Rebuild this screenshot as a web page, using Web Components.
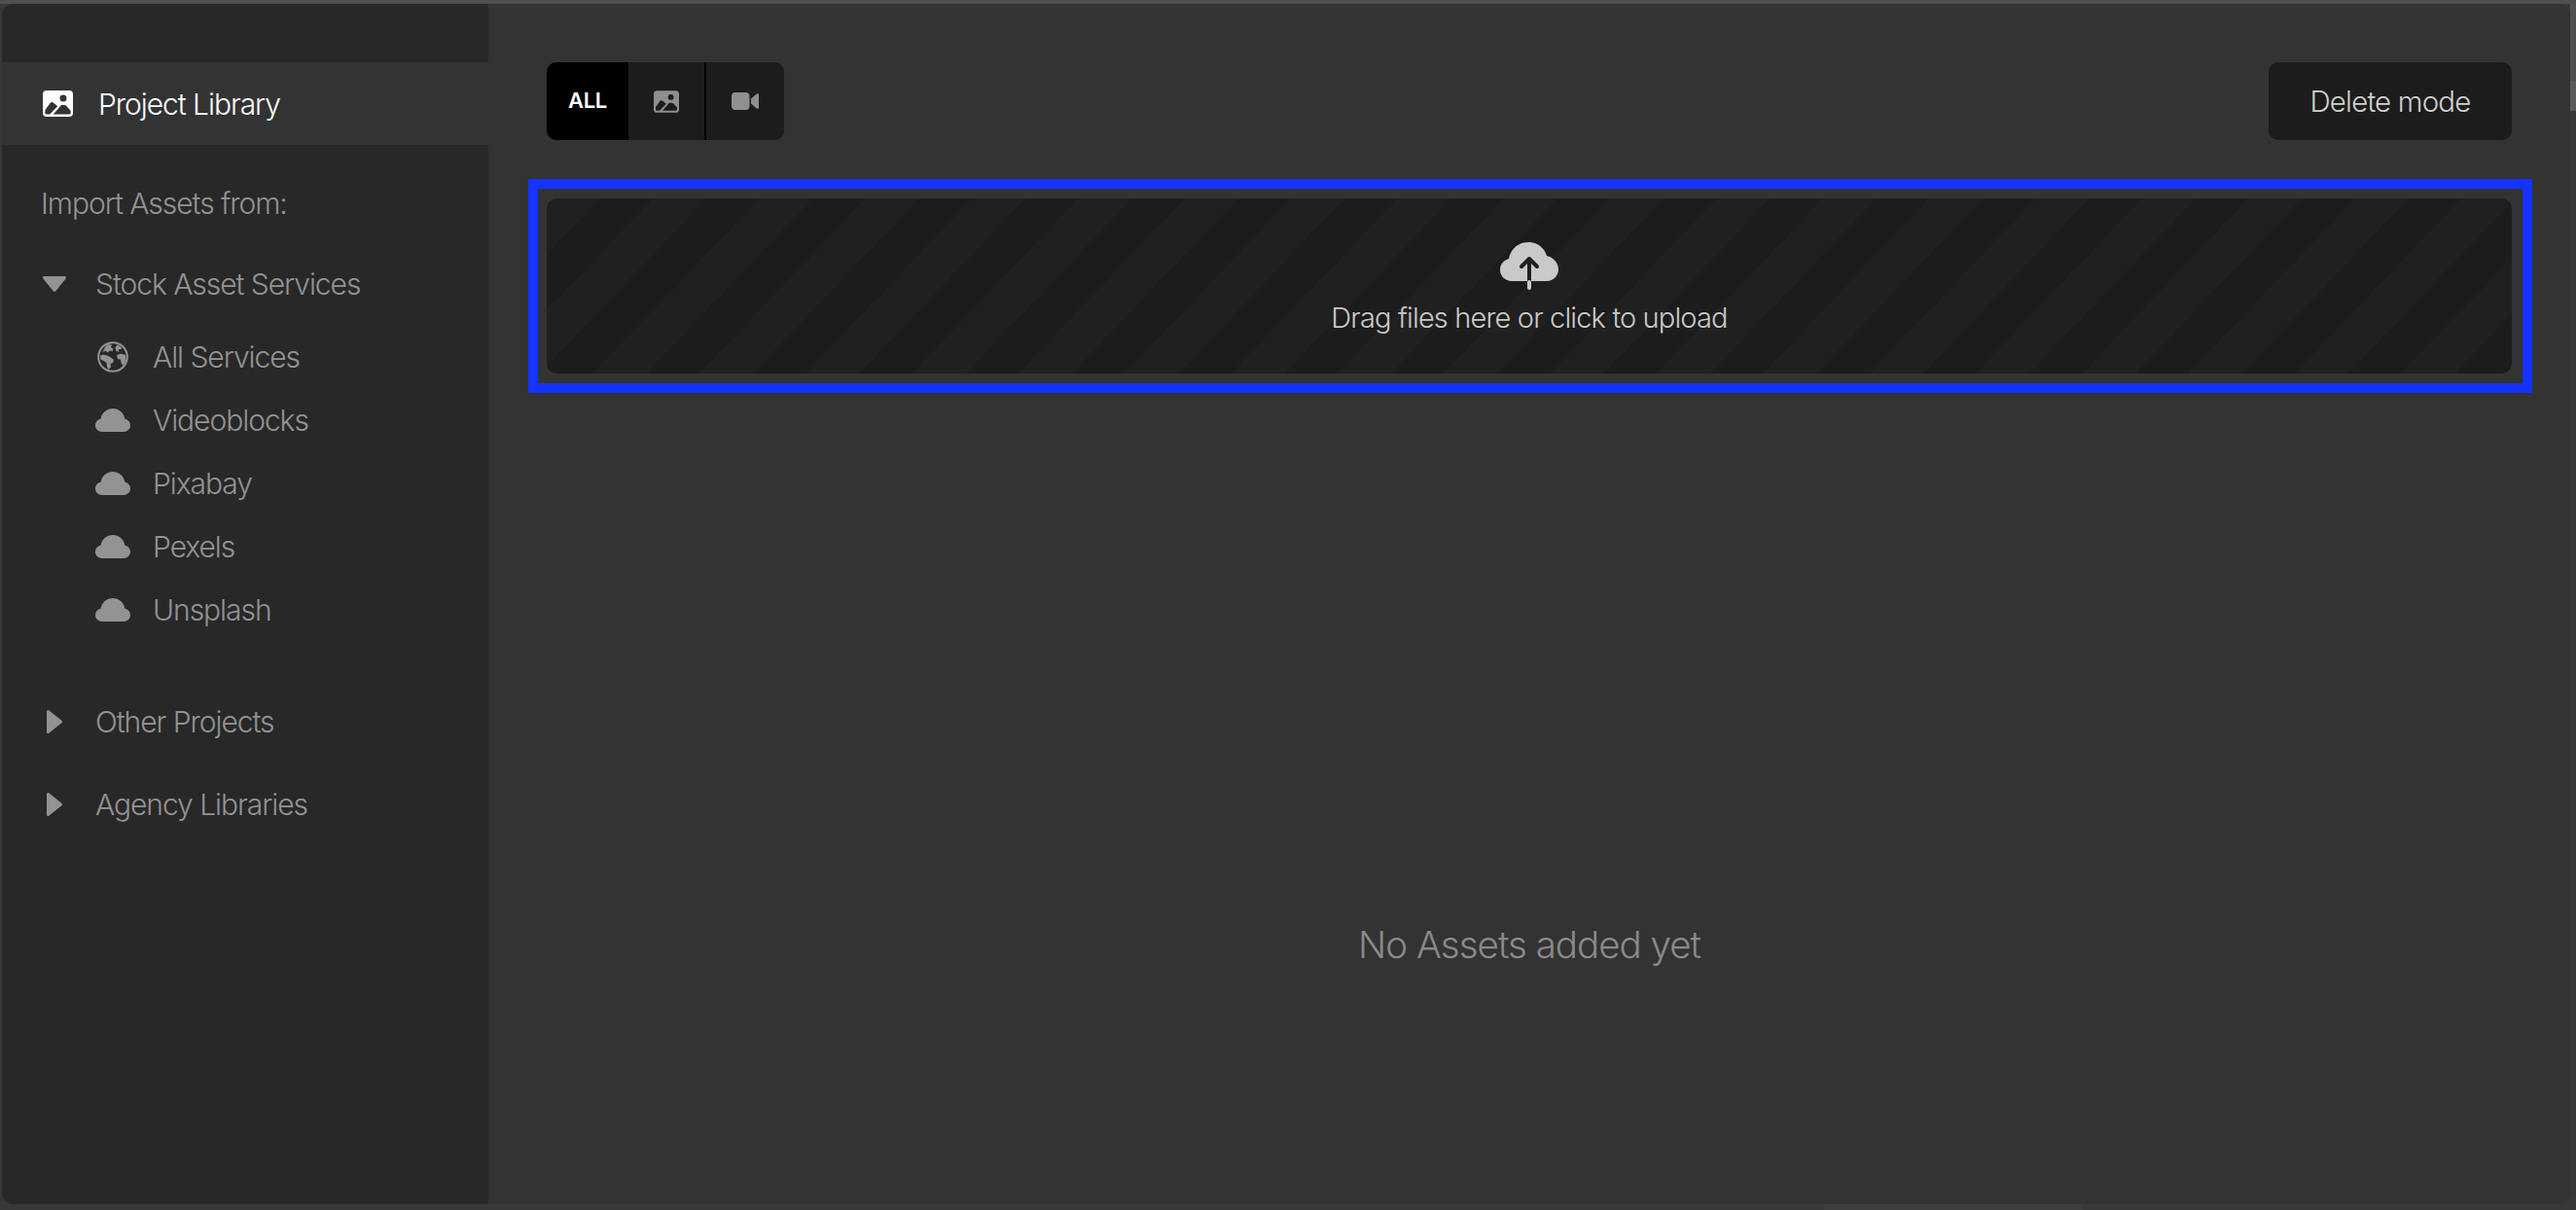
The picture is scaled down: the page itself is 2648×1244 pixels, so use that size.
<!DOCTYPE html>
<html><head><meta charset="utf-8">
<style>
html,body{margin:0;height:100%;background:#3a3a3a;overflow:hidden}
body{font-family:Inter,"Liberation Sans",sans-serif;font-weight:330}
</style></head><body>
<app-shell>
  <side-bar slot="side">
    <nav-row variant="active" text="Project Library" icon="image"></nav-row>
    <side-label>Import Assets from:</side-label>
    <nav-row variant="head" text="Stock Asset Services" icon="down" style="margin-top:38px"></nav-row>
    <nav-row variant="child" text="All Services" icon="globe" style="margin-top:17px"></nav-row>
    <nav-row variant="child" text="Videoblocks" icon="cloud"></nav-row>
    <nav-row variant="child" text="Pixabay" icon="cloud"></nav-row>
    <nav-row variant="child" text="Pexels" icon="cloud"></nav-row>
    <nav-row variant="child" text="Unsplash" icon="cloud"></nav-row>
    <nav-row variant="head" text="Other Projects" icon="right" style="margin-top:58px"></nav-row>
    <nav-row variant="head" text="Agency Libraries" icon="right" style="margin-top:35px"></nav-row>
  </side-bar>
  <main-pane slot="main">
    <tool-bar></tool-bar>
    <drop-zone></drop-zone>
    <empty-note>No Assets added yet</empty-note>
  </main-pane>
</app-shell>
<script>
const ICONS={
 image:'<svg viewBox="0 0 31 27" width="100%" height="100%"><path fill="currentColor" fill-rule="evenodd" d="M4 0H27A4 4 0 0 1 31 4V23A4 4 0 0 1 27 27H4A4 4 0 0 1 0 23V4A4 4 0 0 1 4 0ZM21 4.500A3.500 3.500 0 1 0 21 11.500A3.500 3.500 0 1 0 21 4.500ZM8 12.400L2.800 19.500C2.500 20 2.400 20.400 2.400 21V23.400C2.400 24 2.900 24.500 3.500 24.500H7.200L15.200 16.300L10.800 12.600C10 11.900 8.700 11.500 8 12.400ZM18.600 15.500L10.800 24.500H27.500C28.100 24.500 28.600 24 28.600 23.400V21.300C28.600 20.800 28.400 20.300 28 19.900L24 15.800C23.600 15.400 23 15.100 22.400 15.100H20C19.400 15.100 19 15.200 18.600 15.500Z"/></svg>',
 video:'<svg viewBox="0 0 28 18" width="100%" height="100%"><rect width="18.500" height="18" rx="4" fill="currentColor"/><path fill="currentColor" d="M20 6.500L25.800 1.600C26.600 1 28 1.400 28 2.600V15.400C28 16.600 26.600 17 25.800 16.400L20 11.500Z"/></svg>',
 down:'<svg viewBox="0 0 24 16" width="100%" height="100%"><path fill="currentColor" d="M1.600 0H22.400C23.800 0 24.500 1.500 23.600 2.600L13.300 15.300C12.600 16.200 11.400 16.200 10.700 15.300L.4 2.600C-.5 1.500.2 0 1.600 0Z"/></svg>',
 right:'<svg viewBox="0 0 16 24" width="100%" height="100%"><path fill="currentColor" d="M0 1.600V22.400C0 23.800 1.500 24.500 2.600 23.600L15.300 13.300C16.200 12.600 16.200 11.400 15.300 10.700L2.600 .4C1.500-.5 0 .2 0 1.600Z"/></svg>',
 cloud:'<svg viewBox="0 0 36 24" width="100%" height="100%"><path fill="currentColor" d="M7 24C3 24 0 21 0 17.500C0 14 2.300 11.500 5.500 10.800C6.500 4.500 11.800 0 18 0C24.200 0 29.300 4.300 30.300 10.500C33.700 11.300 36 14 36 17.500C36 21 33 24 29 24Z"/></svg>',
 globe:'<svg viewBox="0 0 32 32" width="100%" height="100%"><circle cx="16" cy="16" r="14.800" fill="none" stroke="currentColor" stroke-width="2"/><path fill="currentColor" d="M10.500 3L15 3.500L14 6L16.500 8L15.500 10L13 9.500L10.500 11.500L8.500 9.500L5.500 11L8 6ZM20.500 3.500L25 6L24.500 8L21.500 8.500L22.500 11L19.500 10L18.500 6.500ZM3 15L6 13.500L10 14.500L14 16.500L17 19L16 22L13.500 23L14 26.500L11.500 29L10 26L9.500 22L6.500 20L3.500 18.500ZM20 14L24 12.500L29 14L29.500 20L26.500 25L24.500 22L24 18.500L21 18Z"/></svg>',
 upload:'<svg viewBox="0 0 60 49" width="100%" height="100%"><path fill="currentColor" d="M12 40C5.500 40 0 35 0 28.500C0 23 3.500 18.500 9 17C10.500 7.500 18.500 0 29 0C38 0 45.500 5.500 48 14C54.500 15.500 60 21 60 28C60 34.500 54.500 40 48 40Z"/><path fill="none" stroke="#1e1e1e" stroke-width="4" stroke-linecap="round" stroke-linejoin="round" d="M22 25L30 17L38 25M30 17V40"/><path fill="none" stroke="currentColor" stroke-width="4" stroke-linecap="round" d="M30 41V47"/></svg>'
};
function def(name,css,html,init){
  customElements.define(name,class extends HTMLElement{
    constructor(){super();this.attachShadow({mode:'open'}).innerHTML='<style>'+css+'</style>'+html;}
    connectedCallback(){init&&init(this,this.shadowRoot)}
  });
}
def('x-icon',':host{display:block;width:var(--w,32px);height:var(--h,32px);line-height:0}svg{display:block}','',(el,r)=>{
  r.innerHTML=r.querySelector('style').outerHTML+ICONS[el.getAttribute('name')];
});
def('app-shell',`:host{display:flex;box-sizing:border-box;width:2648px;height:1244px;padding:4px 6px 6px 2px;
  background:
   linear-gradient(#4f4f4f,#4f4f4f) 0 0/100% 4px no-repeat,
   linear-gradient(#505050,#505050) 100% 4px/6px 79px no-repeat,
   linear-gradient(#5a5a5a,#5a5a5a) 100% 83px/6px 31px no-repeat,
   linear-gradient(#3e3e3e,#3e3e3e) 1875px 100%/266px 6px no-repeat,
   #383838}
 .modal{flex:1;display:flex;border-radius:12px;overflow:hidden;background:#333}`,
 '<div class="modal"><slot name="side"></slot><slot name="main"></slot></div>');
def('side-bar',':host{display:block;flex:0 0 500px;box-sizing:border-box;padding-top:60px;background:#282828}','<slot></slot>');
def('side-label',':host{display:block;margin-top:41px;height:39px;line-height:39px;padding-left:40px;font-size:30px;letter-spacing:-1.050px;color:#939393}','<slot></slot>');
def('nav-row',`:host{display:flex;align-items:center;color:#939393;font-size:30px;letter-spacing:-1.050px;white-space:nowrap}
 :host([variant=active]){height:85px;background:#333;color:#fff;padding-left:42px}
 :host([variant=head]){height:50px;padding-left:42px}
 :host([variant=child]){height:65px;padding-left:96px}
 .i{display:flex;align-items:center;justify-content:center;flex:none}
 :host([variant=active]) .i{width:31px;margin-right:26px}
 :host([variant=head]) .i{width:24px;margin-right:30px}
 :host([variant=child]) .i{width:36px;margin-right:23px}`,
 '<span class="i"></span><span class="t"></span>',(el,r)=>{
   const n=el.getAttribute('icon');
   const ic=document.createElement('x-icon');ic.setAttribute('name',n);
   const size={down:[24,16],right:[16,24],cloud:[36,24],globe:[32,32],image:[31,27]}[n];
   ic.style.setProperty('--w',size[0]+'px');ic.style.setProperty('--h',size[1]+'px');
   r.querySelector('.i').append(ic);r.querySelector('.t').textContent=el.getAttribute('text');
 });
def('main-pane',':host{display:flex;flex-direction:column;flex:1;min-width:0;box-sizing:border-box;padding:60px 60px 0}','<slot></slot>');
def('seg-btn',`:host{display:flex;align-items:center;justify-content:center;height:80px;color:#8f8f8f;background:#1c1c1c}
 :host([on]){background:#000;color:#fff;font:600 22px/78px Inter,"Liberation Sans",sans-serif;letter-spacing:-.3px;align-items:flex-start}`,'<slot></slot>');
def('tool-bar',`:host{display:flex;justify-content:space-between;align-items:flex-start;height:80px}
 .seg{display:flex;border-radius:10px;overflow:hidden;background:#1c1c1c}
 .sep{width:2px;background:#000}
 .del{display:flex;align-items:center;justify-content:center;width:250px;height:80px;border-radius:10px;background:#1c1c1c;color:#cfcfcf;font-size:29.500px;letter-spacing:-.85px}`,
 `<div class="seg"><seg-btn on style="width:84px">ALL</seg-btn>
  <seg-btn style="width:78px"><x-icon name="image" style="--w:26px;--h:23px"></x-icon></seg-btn>
  <div class="sep"></div>
  <seg-btn style="width:80px"><x-icon name="video" style="--w:28px;--h:18px"></x-icon></seg-btn></div>
  <div class="del">Delete mode</div>`);
def('drop-zone',`:host{display:flex;flex-direction:column;align-items:center;box-sizing:border-box;height:180px;margin-top:60px;padding-top:45px;border-radius:10px;
  background:repeating-linear-gradient(133.56deg,#202020 0 39.62px,#1c1c1c 39.62px 79.24px);color:#c9c9c9;
  position:relative;font-size:29px;letter-spacing:-.85px}
 .o{position:absolute;left:-19px;top:-20px;width:2040px;height:200px;border:10px solid #1433ff;pointer-events:none}
 p{margin:9px 0 0;line-height:40px}`,
 '<div class="o"></div><x-icon name="upload" style="--w:60px;--h:49px"></x-icon><p>Drag files here or click to upload</p>');
def('empty-note',':host{display:block;margin-top:565px;text-align:center;font-size:38.500px;line-height:44px;letter-spacing:-1px;color:#8a8a8a}','<slot></slot>');
</script>
</body></html>
